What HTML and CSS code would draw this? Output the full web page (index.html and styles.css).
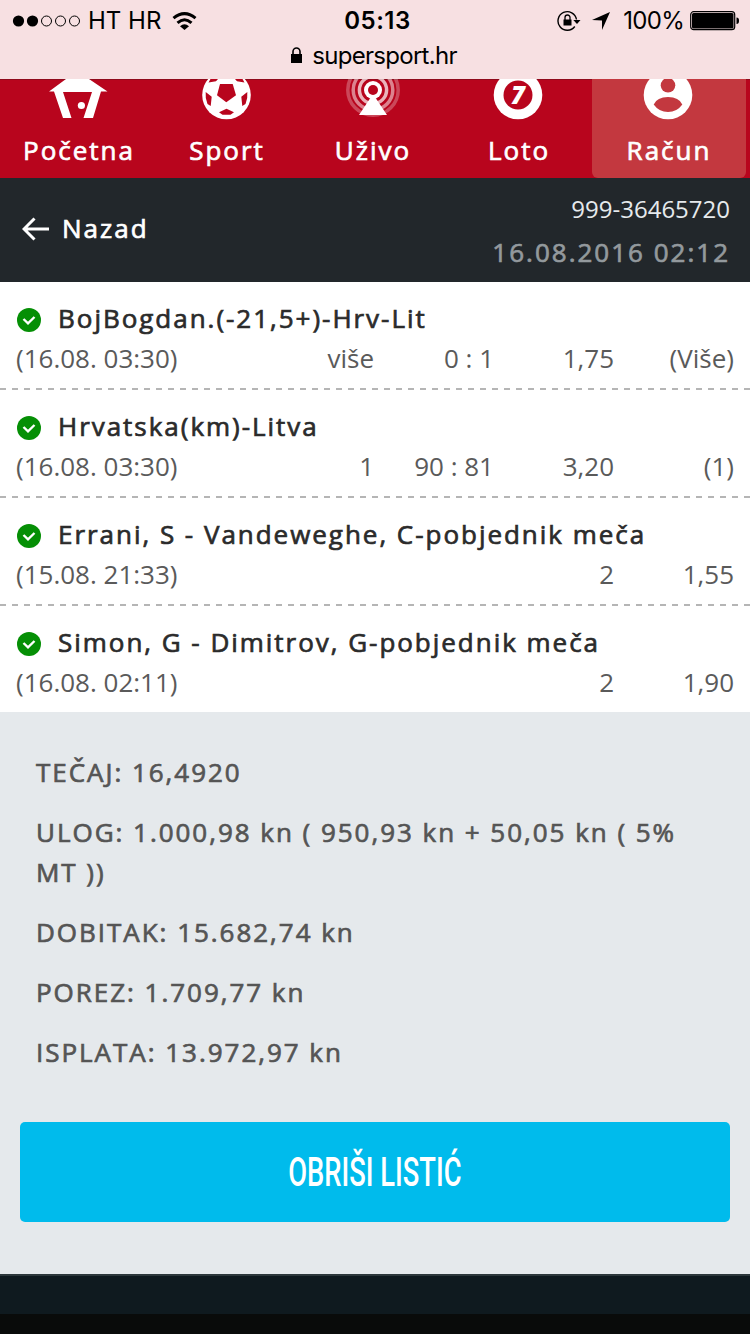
FILE: index.html
```
<!DOCTYPE html>
<html lang="hr">
<head>
  <meta charset="UTF-8" />
  <title>SuperSport</title>
  <link rel="stylesheet" href="styles.css">
</head>
<body>
  <header class="browser-bar">
    <div class="status">
      <div class="status-left">
        <svg width="68" height="12" viewBox="0 0 68 12">
          <circle cx="6.500" cy="6" r="5.600"/><circle cx="20.500" cy="6" r="5.600"/>
          <g fill="none" stroke="#000"><circle cx="34.500" cy="6" r="5"/><circle cx="48.500" cy="6" r="5"/><circle cx="62.500" cy="6" r="5"/></g>
        </svg>
        <span class="carrier">HT HR</span>
        <svg width="25" height="18" viewBox="0 0 24 18">
          <g fill="none" stroke="#000" stroke-width="3"><path d="M1 6.200Q12-3 23 6.200"/><path d="M5 10.800Q12 4.600 19 10.800"/></g>
          <path d="M7.500 14.200Q12 10.200 16.500 14.200L12 18z"/>
        </svg>
      </div>
      <div class="clock">05:13</div>
      <div class="status-right">
        <svg width="24" height="22" viewBox="0 0 24 22">
          <path d="M17.800 16.500A9.300 9.300 0 1 1 19.500 9.500" fill="none" stroke="#000" stroke-width="1.400"/>
          <path d="M16.300 10H23.500L20 14z"/><path d="M6.500 9.500H14.500V15.500H6.500z"/>
          <path d="M8 10V7.500a2.500 2.500 0 0 1 5 0V10" fill="none" stroke="#000" stroke-width="1.300"/>
        </svg>
        <svg class="location" width="18" height="18" viewBox="0 0 18 18"><path d="M18 0L10 18V8.500L0 8z"/></svg>
        <span class="percent">100%</span>
        <svg width="50" height="20" viewBox="0 0 50 20">
          <rect x=".7" y=".7" width="44" height="18" rx="3" fill="none" stroke="#000" stroke-width="1.200"/>
          <rect x="2" y="2" width="41.500" height="15.500" rx="1.500"/><path d="M46.500 6.500q2.500 0 2.500 3.200t-2.500 3.200z"/>
        </svg>
      </div>
    </div>
    <div class="address">
      <svg width="11" height="16" viewBox="0 0 11 16"><path d="M0 7H11V16H0z"/><path d="M2 8V4.500a3.500 3.500 0 0 1 7 0V8" fill="none" stroke="#000" stroke-width="1.600"/></svg>
      <span>supersport.hr</span>
    </div>
  </header>

  <nav class="menu">
    <a class="menu-item">
      <svg width="60" height="41" viewBox="49 79 60 41"><path d="M66 79H89L107.500 91.500H101L93 118H83.500L92 92H63L71.500 118H63L54 91.500H49z"/><circle cx="81.400" cy="105.500" r="3.600"/></svg>
      <span>Početna</span>
    </a>
    <a class="menu-item">
      <svg width="60" height="41" viewBox="197 79 60 41">
        <circle cx="226.500" cy="95" r="24.300"/>
        <g class="cut">
          <path d="M220 84H232.700L236 95.300L226.300 102.300L217 95.300z"/>
          <path d="M205.700 92L211.700 96.700L210.700 106L207.500 104Q205 98 205.700 92zM247.300 92L241.300 96.700L242.300 106L245.500 104Q248 98 247.300 92z"/>
          <path d="M219 112.200L226.500 108.700L234 112.200L230.500 114.700H222.500z"/>
          <path d="M210.500 79H218L216 81.300L208.500 82.500zM242.500 79H235L237 81.300L244.500 82.500z"/>
        </g>
      </svg>
      <span>Sport</span>
    </a>
    <a class="menu-item">
      <svg width="60" height="41" viewBox="343 79 60 41">
        <circle class="ring" cx="373" cy="90" r="25.200" opacity=".27"/>
        <circle class="ring" cx="373" cy="90" r="19.800" opacity=".5"/>
        <circle class="ring" cx="373" cy="90" r="13.600" opacity=".7"/>
        <circle class="cut" cx="373" cy="90" r="10.500"/>
        <circle cx="373" cy="90" r="9"/><path d="M373 94L387 115H359z"/><circle class="cut" cx="373" cy="90" r="5"/>
      </svg>
      <span>Uživo</span>
    </a>
    <a class="menu-item">
      <svg width="60" height="41" viewBox="489 79 60 41">
        <circle cx="518" cy="95" r="24.300"/><circle class="cut" cx="518" cy="95" r="14.500"/>
        <text class="seven" x="511" y="104.300">7</text>
      </svg>
      <span>Loto</span>
    </a>
    <a class="menu-item active">
      <svg width="60" height="41" viewBox="639 79 60 41">
        <circle cx="668" cy="95" r="24.300"/>
        <g class="cut"><circle cx="668" cy="85.300" r="7.300"/><path d="M653.700 104.500Q657 97 668 97T682.300 104.500Q677 112 668 112T653.700 104.500z"/></g>
      </svg>
      <span>Račun</span>
    </a>
  </nav>

  <div class="ticket-header">
    <a class="back">
      <svg width="27" height="24" viewBox="0 0 27 24" fill="none" stroke="#fff" stroke-width="3"><path d="M27 12H2M12.500 1.500L2 12L12.500 22.500"/></svg>
      <span>Nazad</span>
    </a>
    <div class="ticket-info">
      <div class="ticket-number">999-36465720</div>
      <div class="ticket-date">16.08.2016 02:12</div>
    </div>
  </div>

  <main>
    <ul class="bets">
      <li class="bet">
        <div class="bet-title"><svg class="check" viewBox="0 0 24 24"><circle cx="12" cy="12" r="12"/><path d="M6.500 11L11 15.300L17.500 9"/></svg>BojBogdan.(-21,5+)-Hrv-Lit</div>
        <div class="bet-row"><span>(16.08. 03:30)</span><span>više</span><span>0 : 1</span><span>1,75</span><span>(Više)</span></div>
      </li>
      <li class="bet">
        <div class="bet-title"><svg class="check" viewBox="0 0 24 24"><circle cx="12" cy="12" r="12"/><path d="M6.500 11L11 15.300L17.500 9"/></svg>Hrvatska(km)-Litva</div>
        <div class="bet-row"><span>(16.08. 03:30)</span><span>1</span><span>90 : 81</span><span>3,20</span><span>(1)</span></div>
      </li>
      <li class="bet">
        <div class="bet-title"><svg class="check" viewBox="0 0 24 24"><circle cx="12" cy="12" r="12"/><path d="M6.500 11L11 15.300L17.500 9"/></svg>Errani, S - Vandeweghe, C-pobjednik meča</div>
        <div class="bet-row"><span>(15.08. 21:33)</span><span></span><span></span><span>2</span><span>1,55</span></div>
      </li>
      <li class="bet">
        <div class="bet-title"><svg class="check" viewBox="0 0 24 24"><circle cx="12" cy="12" r="12"/><path d="M6.500 11L11 15.300L17.500 9"/></svg>Simon, G - Dimitrov, G-pobjednik meča</div>
        <div class="bet-row"><span>(16.08. 02:11)</span><span></span><span></span><span>2</span><span>1,90</span></div>
      </li>
    </ul>

    <section class="summary">
      <p>TEČAJ: 16,4920</p>
      <p>ULOG: 1.000,98 kn ( 950,93 kn + 50,05 kn ( 5% MT ))</p>
      <p>DOBITAK: 15.682,74 kn</p>
      <p>POREZ: 1.709,77 kn</p>
      <p>ISPLATA: 13.972,97 kn</p>
      <button class="delete"><span>OBRIŠI LISTIĆ</span></button>
    </section>
  </main>

  <footer class="footer"><div class="footer-bottom"></div></footer>
</body>
</html>
```
FILE: styles.css
```
* {
  box-sizing: border-box;
}
body {
  margin: 0;
  width: 750px;
  height: 1334px;
  overflow: hidden;
  display: flex;
  flex-direction: column;
  font-family: "Open Sans", sans-serif;
  font-size: 26px;
  background: #fff;
}
svg {
  display: block;
  flex: none;
}
.browser-bar {
  height: 79px;
  background: #f7e0e2;
  font-family: Inter, sans-serif;
  font-size: 24px;
  color: #000;
}
.status {
  display: grid;
  grid-template-columns: 1fr 80px 1fr;
  height: 41px;
  align-items: center;
  padding: 0 10px 0 12px;
}
.status-left, .status-right {
  display: flex;
  align-items: center;
}
.carrier {
  margin: 0 11px 0 8px;
}
.clock {
  padding-left: 3px;
  font-weight: 600;
  letter-spacing: 0.5px;
  text-align: center;
}
.status-right {
  justify-content: flex-end;
}
.location {
  margin: 0 13px 0 11px;
}
.percent {
  margin-right: 6px;
  letter-spacing: -0.7px;
}
.address {
  display: flex;
  align-items: center;
  justify-content: center;
  gap: 10px;
  height: 28px;
  padding-right: 2px;
  letter-spacing: -0.7px;
}
.menu {
  display: grid;
  grid-template-columns: 150px 146px 146px 146px 154px;
  height: 99px;
  padding: 0 4px;
  background: #b8051d;
  box-shadow: inset 0 1px #8f0a1b;
}
.menu-item {
  display: flex;
  flex-direction: column;
  align-items: center;
  color: #fff;
  letter-spacing: 2px;
  line-height: 36px;
}
.menu-item span, .back, .ticket-date, .bet-title, .summary p {
  -webkit-text-stroke: 0.7px;
}
.menu-item svg {
  fill: #fff;
  margin-bottom: 12px;
}
.menu-item .cut {
  fill: #b8051d;
}
.menu-item .ring {
  fill: none;
  stroke: #fff;
  stroke-width: 3.5;
}
.menu-item .seven {
  font: italic 800 24px "Open Sans", sans-serif;
  letter-spacing: 0;
}
.active {
  background: #c3383f;
  border-radius: 0 0 6px 6px;
}
.menu-item.active .cut {
  fill: #c3383f;
}
.ticket-header {
  display: flex;
  justify-content: space-between;
  align-items: center;
  height: 104px;
  padding: 0 20px 0 22px;
  background: #22272b;
}
.back {
  display: flex;
  align-items: center;
  gap: 13px;
  padding-bottom: 4px;
  color: #fff;
  letter-spacing: 2px;
}
.back svg {
  margin-top: 2px;
}
.ticket-info {
  text-align: right;
}
.ticket-number {
  font-size: 24px;
  line-height: 43px;
  color: #e6eaed;
}
.ticket-date {
  padding-top: 1px;
  line-height: 43px;
  letter-spacing: 2px;
  color: #93999d;
}
.bets {
  list-style: none;
  margin: 0;
  padding: 0;
}
.bet {
  height: 108px;
  padding: 16px 16px 0;
  background: repeating-linear-gradient(90deg, #b5b5b5 0 6px, transparent 6px 12px) 0 100% / 100% 2px no-repeat;
}
.bet:last-child {
  height: 106px;
  background: none;
}
.bet-title {
  display: flex;
  align-items: center;
  gap: 17px;
  padding-left: 1px;
  line-height: 40px;
  letter-spacing: 1.97px;
  color: #2b2b2b;
}
.check {
  width: 24px;
  height: 24px;
  margin-top: 4px;
  fill: #058f05;
}
.check path {
  fill: none;
  stroke: #fff;
  stroke-width: 2.4;
}
.bet-row {
  display: grid;
  grid-template-columns: 1fr 120px 120px 120px 120px;
  line-height: 40px;
  color: #5a5a5a;
}
.bet-row span + span {
  text-align: right;
}
.summary {
  height: 562px;
  padding: 40px 20px 0;
  background: #e5e9ec;
}
.summary p {
  margin: 0 16px 20px;
  line-height: 40px;
  letter-spacing: 1.97px;
  color: #555;
}
.delete {
  display: flex;
  justify-content: center;
  align-items: center;
  width: 100%;
  height: 100px;
  margin-top: 50px;
  border: 0;
  border-radius: 5px;
  background: #00bbec;
  font: 500 40px Roboto, sans-serif;
  color: #fff;
}
.delete span {
  white-space: nowrap;
  transform: scaleX(0.683);
}
.footer {
  flex: 1;
  padding-top: 38px;
  border-top: 2px solid #2c373b;
  background: #0f1a1f;
}
.footer-bottom {
  height: 20px;
  background: #090b0a;
}
```
